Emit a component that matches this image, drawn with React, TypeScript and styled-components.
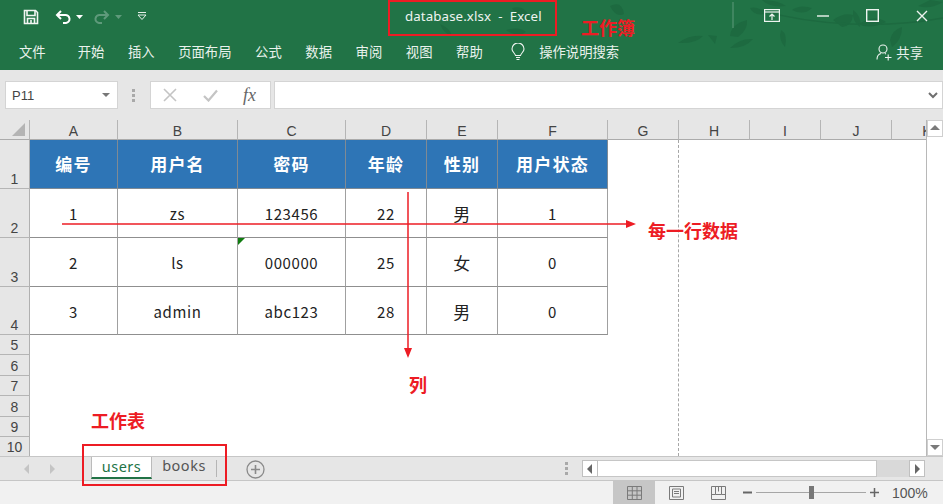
import React from 'react';
import styled, { createGlobalStyle } from 'styled-components';

const CJK = `"Noto Sans CJK SC", "Liberation Sans", sans-serif`;
const RED = '#ed1c24';

const GlobalStyle = createGlobalStyle`
    html, body {
        margin: 0;
        padding: 0;
        background: #fff;
    }
    * {
        box-sizing: border-box;
    }
`;

const Page = styled.div`
    position: relative;
    display: flex;
    flex-direction: column;
    width: 943px;
    height: 504px;
    overflow: hidden;
    font-family: ${CJK};
`;

const TitleBar = styled.header`
    position: relative;
    height: 70px;
    background: #217346;
    color: #fff;
`;

const LeafArt = styled.svg`
    position: absolute;
    left: 0;
    top: 0;
`;

const QuickRow = styled.div`
    position: relative;
    display: flex;
    align-items: center;
    height: 35px;
    padding: 0 0 2px 23px;
`;

const QuickIcon = styled.svg<{ $gap?: number }>`
    display: block;
    margin-left: ${p => p.$gap ?? 0}px;
`;

const DocTitle = styled.div`
    margin: -1px 0 0 258px;
    width: 150px;
    font-family: "Noto Sans", sans-serif;
    font-size: 13.3px;
    letter-spacing: 0.1px;
    white-space: pre;
    color: #eef4f0;
`;

const WindowControls = styled.div`
    display: flex;
    align-items: center;
    margin: -2px 0 0 auto;
    padding-right: 15px;
    gap: 37px;
`;

const RibbonRow = styled.nav`
    position: relative;
    display: flex;
    align-items: center;
    height: 35px;
    padding: 0 0 1px 19px;
    font-size: 13.33px;
    color: #eaf2ed;
`;

const RibbonTab = styled.span<{ $gap: number }>`
    margin-right: ${p => p.$gap}px;
    line-height: 18px;
`;

const SearchHint = styled.span`
    margin-left: 14px;
    line-height: 18px;
`;

const ShareBox = styled.div`
    display: flex;
    align-items: center;
    gap: 4px;
    margin-left: auto;
    padding-right: 20px;
`;

const FormulaRow = styled.div`
    display: flex;
    align-items: center;
    height: 50px;
    padding-left: 5px;
    background: #e6e6e6;
`;

const NameBox = styled.div`
    display: flex;
    align-items: center;
    justify-content: space-between;
    width: 113px;
    height: 28px;
    padding: 0 7px 0 6px;
    background: #fff;
    border: 1px solid #d4d4d4;
    font-family: "Liberation Sans", sans-serif;
    font-size: 13px;
    color: #444;
`;

const Grip = styled.div`
    display: flex;
    flex-direction: column;
    gap: 2px;
    width: 3px;
    margin: 0 15px 0 14px;
`;

const GripDot = styled.span`
    width: 3px;
    height: 3px;
    background: #a9a9a9;
`;

const FxButtons = styled.div`
    display: flex;
    align-items: center;
    justify-content: space-between;
    width: 121px;
    height: 28px;
    padding: 0 14px 0 12px;
    background: #fff;
    border: 1px solid #d4d4d4;
`;

const FxMark = styled.span`
    font-family: "Liberation Serif", serif;
    font-style: italic;
    font-size: 18px;
    color: #666;
`;

const FormulaInput = styled.div`
    display: flex;
    align-items: center;
    justify-content: flex-end;
    flex: 1;
    height: 28px;
    margin-left: 3px;
    padding-right: 4px;
    background: #fff;
    border: 1px solid #d4d4d4;
`;

const SheetArea = styled.div`
    display: flex;
    height: 336px;
    background: #fff;
`;

const CellGrid = styled.div`
    position: relative;
    display: grid;
    width: 926px;
    height: 336px;
    overflow: hidden;
    grid-template-columns: 30px 88px 120px 108px 81px 71px 110px 71px 71px 71px 71px 71px;
    grid-template-rows: 20px 49px 49px 49px 48px repeat(6, 20.4px);
`;

const Corner = styled.div`
    position: relative;
    background: #e6e6e6;
    border-right: 1px solid #b5b5b5;
    border-bottom: 1px solid #ababab;
`;

const CornerMark = styled.span`
    position: absolute;
    right: 4px;
    bottom: 3px;
    width: 0;
    height: 0;
    border-style: solid;
    border-width: 0 0 13px 13px;
    border-color: transparent transparent #b4b4b4 transparent;
`;

const ColHead = styled.div`
    display: flex;
    align-items: center;
    justify-content: center;
    padding-top: 2px;
    background: #e6e6e6;
    border-right: 1px solid #b5b5b5;
    border-bottom: 1px solid #ababab;
    font-family: "Liberation Sans", sans-serif;
    font-size: 14px;
    color: #444;
`;

const RowHead = styled.div`
    display: flex;
    align-items: flex-end;
    justify-content: center;
    background: #e6e6e6;
    border-right: 1px solid #b0b0b0;
    border-bottom: 1px solid #b5b5b5;
    font-family: "Liberation Sans", sans-serif;
    font-size: 14px;
    line-height: 18px;
    color: #444;
`;

const HeadCell = styled.div`
    display: flex;
    align-items: center;
    justify-content: center;
    padding-bottom: 1px;
    background: #2e75b6;
    border-right: 1px solid #7f8a94;
    border-bottom: 1px solid #7f8a94;
    font-weight: bold;
    font-size: 17px;
    letter-spacing: 1.2px;
    color: #fff;
`;

const DataCell = styled.div<{ $large?: boolean }>`
    position: relative;
    display: flex;
    align-items: center;
    justify-content: center;
    padding-top: 1px;
    border-right: 1px solid #a0a0a0;
    border-bottom: 1px solid #8f8f8f;
    font-size: ${p => (p.$large ? 17 : 15)}px;
    letter-spacing: 0.6px;
    color: #222;
`;

const EmptyCell = styled.div``;

const ErrorTick = styled.span`
    position: absolute;
    left: 0;
    top: 0;
    width: 0;
    height: 0;
    border-style: solid;
    border-width: 7px 7px 0 0;
    border-color: #107c10 transparent transparent transparent;
`;

const PageBreak = styled.div`
    position: absolute;
    left: 678px;
    top: 20px;
    bottom: 0;
    border-left: 1px dashed #a6a6a6;
`;

const VScroll = styled.div`
    display: flex;
    flex-direction: column;
    justify-content: space-between;
    width: 17px;
    background: #fff;
    border-left: 1px solid #b8b8b8;
`;

const ScrollBtn = styled.div`
    display: flex;
    align-items: center;
    justify-content: center;
    width: 16px;
    height: 17px;
    background: #fff;
    border: 1px solid #cfcfcf;
`;

const TabStrip = styled.div`
    display: flex;
    height: 25px;
    background: #e6e6e6;
    border-top: 1px solid #c6c6c6;
    border-bottom: 1px solid #c6c6c6;
`;

const TabNav = styled.div`
    display: flex;
    align-items: center;
    gap: 15px;
    width: 91px;
    padding-left: 22px;
`;

const SheetTab = styled.div<{ $active?: boolean }>`
    display: flex;
    align-items: ${p => (p.$active ? 'center' : 'flex-start')};
    justify-content: center;
    height: 22px;
    padding-bottom: ${p => (p.$active ? 2 : 0)}px;
    font-family: "Noto Sans", sans-serif;
    font-size: 14.5px;
    line-height: 16px;
    letter-spacing: 0.5px;
    color: ${p => (p.$active ? '#217346' : '#555')};
    width: ${p => (p.$active ? 61 : 64)}px;
    background: ${p => (p.$active ? '#fff' : 'transparent')};
    border-bottom: ${p => (p.$active ? '2px solid #217346' : '0')};
    border-left: ${p => (p.$active ? '1px solid #bbb' : '0')};
    border-right: ${p => (p.$active ? '1px solid #bbb' : '0')};
`;

const TabDivider = styled.span`
    width: 1px;
    height: 17px;
    margin-top: 3px;
    background: #b5b5b5;
`;

const AddSheet = styled.svg`
    margin: 3px 0 0 29px;
`;

const HGrip = styled(Grip)`
    margin: 5px 14px 0 auto;
    align-self: flex-start;
`;

const HScroll = styled.div`
    display: flex;
    align-items: center;
    width: 343px;
    height: 17px;
    margin: 3px 18px 0 0;
`;

const HBtn = styled(ScrollBtn)`
    border-color: #c0c0c0;
`;

const HThumb = styled.div`
    width: 279px;
    height: 17px;
    background: #fff;
    border: 1px solid #c6c6c6;
    border-left: 0;
`;

const HTrack = styled.div`
    flex: 1;
    height: 17px;
    background: #d9d9d9;
`;

const StatusBar = styled.footer`
    display: flex;
    align-items: stretch;
    height: 23px;
    padding-left: 613px;
    background: #f1f1f1;
    color: #555;
`;

const ViewBtn = styled.div<{ $active?: boolean }>`
    display: flex;
    align-items: center;
    justify-content: center;
    width: 42px;
    background: ${p => (p.$active ? '#c6c6c6' : 'transparent')};
`;

const ZoomBox = styled.div`
    display: flex;
    align-items: center;
    margin-left: 4px;
`;

const ZoomTrack = styled.div`
    position: relative;
    width: 110px;
    height: 1px;
    margin: 0 4px;
    background: #a6a6a6;
`;

const ZoomThumb = styled.span`
    position: absolute;
    left: 53px;
    top: -6px;
    width: 5px;
    height: 13px;
    background: #777;
`;

const ZoomText = styled.span`
    margin-left: 13px;
    font-family: "Liberation Sans", sans-serif;
    font-size: 14px;
    color: #555;
`;

/* annotations drawn on top of the screenshot */
const RedBox = styled.div<{ $x: number; $y: number; $w: number; $h: number }>`
    position: absolute;
    left: ${p => p.$x}px;
    top: ${p => p.$y}px;
    width: ${p => p.$w}px;
    height: ${p => p.$h}px;
    border: 2px solid ${RED};
`;

const RedLabel = styled.span<{ $x: number; $y: number }>`
    position: absolute;
    left: ${p => p.$x}px;
    top: ${p => p.$y}px;
    font-size: 18px;
    font-weight: bold;
    line-height: 20px;
    white-space: nowrap;
    color: ${RED};
`;

const ArrowLayer = styled.svg`
    position: absolute;
    left: 0;
    top: 0;
    pointer-events: none;
`;

const leaves = [
    'M730 36 Q731 24 747 20 Q748 30 738 37 Z',
    'M678 43 Q690 34 703 36 Q696 44 678 43 Z',
    'M708 35 L717 36 L715 44 Z',
    'M730 48 Q740 38 753 39 Q746 48 730 48 Z',
    'M781 30 Q788 34 785 47 Q778 40 781 30 Z',
    'M792 10 Q800 4 812 8 Q804 16 792 10 Z',
    'M833 20 Q844 12 853 15 Q852 26 842 27 Z',
    'M853 10 Q862 16 860 27 Q852 22 853 10 Z',
    'M858 24 Q870 30 886 22 Q876 14 858 24 Z',
    'M890 40 Q892 30 902 27 Q902 40 892 47 Z',
    'M762 0 Q770 8 786 6 Q778 0 762 0 Z',
    'M750 8 Q760 6 764 14 Q754 16 750 8 Z',
    'M918 6 Q930 10 943 2 L930 0 Z',
    'M512 8 Q526 4 530 20 Q520 22 512 8 Z',
    'M440 24 Q450 28 452 36 Q444 34 440 24 Z',
    'M506 30 Q520 26 526 32 Q518 38 506 30 Z',
    'M610 6 Q622 0 624 14 Q616 18 610 6 Z',
];

const columns = ['A', 'B', 'C', 'D', 'E', 'F', 'G', 'H', 'I', 'J', 'K'];
const headers = ['编号', '用户名', '密码', '年龄', '性别', '用户状态'];
const rows = [
    ['1', 'zs', '123456', '22', '男', '1'],
    ['2', 'ls', '000000', '25', '女', '0'],
    ['3', 'admin', 'abc123', '28', '男', '0'],
];

const Caret = ({ color = '#fff' }: { color?: string }) => (
    <QuickIcon $gap={5} width="7" height="4" viewBox="0 0 7 4">
        <path d="M0 0h7L3.5 4z" fill={color} />
    </QuickIcon>
);

const Triangle = ({ dir, color }: { dir: 'up' | 'down' | 'left' | 'right'; color: string }) => {
    const paths = {
        up: 'M0 6 L5 1 L10 6Z',
        down: 'M0 2 L10 2 L5 7Z',
        left: 'M7 0 L7 10 L2 5Z',
        right: 'M3 0 L3 10 L8 5Z',
    };
    return (
        <svg width="10" height="10" viewBox="0 0 10 10">
            <path d={paths[dir]} fill={color} />
        </svg>
    );
};

export default function App() {
    return (
        <Page>
            <GlobalStyle />
            <TitleBar>
                <LeafArt width="943" height="70" viewBox="0 0 943 70">
                    <g fill="#1d6a40">
                        {leaves.map((d, i) => <path key={i} d={d} />)}
                    </g>
                    <path d="M760 10 Q800 22 850 24 T943 18" fill="none" stroke="#1d6a40" strokeWidth="1.5" />
                    <path d="M733 2 V28" stroke="#5f9a7b" strokeWidth="1" />
                </LeafArt>
                <QuickRow>
                    <QuickIcon width="16" height="16" viewBox="0 0 16 16" fill="none" stroke="#f2f6f3" strokeWidth="1.6">
                        <path d="M1.5 1.5h11l2 2v11h-13z" />
                        <path d="M4 1.5v5h8v-5M4.5 14.5v-5h7v5" />
                        <path d="M8 11v3" />
                    </QuickIcon>
                    <QuickIcon $gap={16} width="16" height="16" viewBox="0 0 16 16" fill="none" stroke="#fff" strokeWidth="2">
                        <path d="M6 2 2 6l4 4" />
                        <path d="M2.5 6H10a4 4 0 0 1 1 8H8" />
                    </QuickIcon>
                    <Caret />
                    <QuickIcon $gap={11} width="16" height="16" viewBox="0 0 16 16" fill="none" stroke="#5f9a7b" strokeWidth="2">
                        <path d="m10 2 4 4-4 4" />
                        <path d="M13.5 6H6a4 4 0 0 0-1 8h3" />
                    </QuickIcon>
                    <Caret color="#5f9a7b" />
                    <QuickIcon $gap={15} width="10" height="9" viewBox="0 0 10 9" fill="none" stroke="#e6efe9" strokeWidth="1">
                        <path d="M1 0.5h8M1 3h8L5 7.5z" />
                    </QuickIcon>
                    <DocTitle>database.xlsx  -  Excel</DocTitle>
                    <WindowControls>
                        <svg width="16" height="13" viewBox="0 0 16 13" fill="none" stroke="#eef4f0" strokeWidth="1.2">
                            <rect x="0.6" y="0.6" width="14.8" height="11.8" />
                            <path d="M1 3h14" />
                            <path d="M5.5 7.5 8 5l2.5 2.5M8 5v6" />
                        </svg>
                        <svg width="12" height="2" viewBox="0 0 12 2">
                            <path d="M0 1h12" stroke="#eef4f0" strokeWidth="1.4" />
                        </svg>
                        <svg width="13" height="13" viewBox="0 0 13 13" fill="none" stroke="#eef4f0" strokeWidth="1.4">
                            <rect x="0.7" y="0.7" width="11.6" height="11.6" />
                        </svg>
                        <svg width="12" height="12" viewBox="0 0 12 12" fill="none" stroke="#eef4f0" strokeWidth="1.4">
                            <path d="m1 1 10 10M11 1 1 11" />
                        </svg>
                    </WindowControls>
                </QuickRow>
                <RibbonRow>
                    <RibbonTab $gap={32}>文件</RibbonTab>
                    <RibbonTab $gap={23.6}>开始</RibbonTab>
                    <RibbonTab $gap={23.6}>插入</RibbonTab>
                    <RibbonTab $gap={23.6}>页面布局</RibbonTab>
                    <RibbonTab $gap={23.6}>公式</RibbonTab>
                    <RibbonTab $gap={23.6}>数据</RibbonTab>
                    <RibbonTab $gap={23.6}>审阅</RibbonTab>
                    <RibbonTab $gap={23.6}>视图</RibbonTab>
                    <RibbonTab $gap={28.5}>帮助</RibbonTab>
                    <svg width="14" height="18" viewBox="0 0 14 18" fill="none" stroke="#eef4f0" strokeWidth="1.1">
                        <path d="M4.5 12.5C4 10 1 9 1 6a6 6 0 0 1 12 0c0 3-3 4-3.500 6.500z" />
                        <path d="M5 14.500h4M5.500 16.500h3" />
                    </svg>
                    <SearchHint>操作说明搜索</SearchHint>
                    <ShareBox>
                        <svg width="16" height="17" viewBox="0 0 16 17" fill="none" stroke="#eef4f0" strokeWidth="1.1">
                            <circle cx="7" cy="5" r="4" />
                            <path d="M1 15.500C1 12 3 10 5 9.500M9 9.500l1 .5" />
                            <path d="M9 13.500h6.500M12.200 10.500v6" />
                        </svg>
                        <span>共享</span>
                    </ShareBox>
                </RibbonRow>
            </TitleBar>

            <FormulaRow>
                <NameBox>
                    P11
                    <svg width="8" height="4" viewBox="0 0 8 4"><path d="M0 0h8L4 4z" fill="#777" /></svg>
                </NameBox>
                <Grip><GripDot /><GripDot /><GripDot /></Grip>
                <FxButtons>
                    <svg width="14" height="14" viewBox="0 0 14 14" fill="none" stroke="#c4c4c4" strokeWidth="1.6">
                        <path d="m1 1 12 12M13 1 1 13" />
                    </svg>
                    <svg width="15" height="13" viewBox="0 0 15 13" fill="none" stroke="#c4c4c4" strokeWidth="2.2">
                        <path d="m1 7 4.500 4.500L14 1.500" />
                    </svg>
                    <FxMark>fx</FxMark>
                </FxButtons>
                <FormulaInput>
                    <svg width="10" height="7" viewBox="0 0 10 7" fill="none" stroke="#6f6f6f" strokeWidth="2">
                        <path d="m1 1 4 4 4-4" />
                    </svg>
                </FormulaInput>
            </FormulaRow>

            <SheetArea>
                <CellGrid>
                    <Corner><CornerMark /></Corner>
                    {columns.map(c => <ColHead key={c}>{c}</ColHead>)}

                    <RowHead>1</RowHead>
                    {headers.map(h => <HeadCell key={h}>{h}</HeadCell>)}
                    {columns.slice(6).map(c => <EmptyCell key={c} />)}

                    {rows.map((row, r) => (
                        <React.Fragment key={r}>
                            <RowHead>{r + 2}</RowHead>
                            {row.map((v, c) => (
                                <DataCell key={c} $large={c === 4}>
                                    {r === 1 && c === 2 && <ErrorTick />}
                                    {v}
                                </DataCell>
                            ))}
                            {columns.slice(6).map(c => <EmptyCell key={c} />)}
                        </React.Fragment>
                    ))}

                    {[5, 6, 7, 8, 9, 10].map(n => (
                        <React.Fragment key={n}>
                            <RowHead>{n}</RowHead>
                            {columns.map(c => <EmptyCell key={c} />)}
                        </React.Fragment>
                    ))}
                    <PageBreak />
                </CellGrid>
                <VScroll>
                    <ScrollBtn><Triangle dir="up" color="#7a7a7a" /></ScrollBtn>
                    <ScrollBtn><Triangle dir="down" color="#7a7a7a" /></ScrollBtn>
                </VScroll>
            </SheetArea>

            <TabStrip>
                <TabNav>
                    <Triangle dir="left" color="#c4c4c4" />
                    <Triangle dir="right" color="#c4c4c4" />
                </TabNav>
                <SheetTab $active>users</SheetTab>
                <SheetTab>books</SheetTab>
                <TabDivider />
                <AddSheet width="19" height="19" viewBox="0 0 19 19" fill="none" stroke="#8a8a8a" strokeWidth="1.3">
                    <circle cx="9.500" cy="9.500" r="8.500" />
                    <path d="M9.500 5v9M5 9.500h9" strokeWidth="1.600" />
                </AddSheet>
                <HGrip><GripDot /><GripDot /><GripDot /></HGrip>
                <HScroll>
                    <HBtn><Triangle dir="left" color="#666" /></HBtn>
                    <HThumb />
                    <HTrack />
                    <HBtn><Triangle dir="right" color="#666" /></HBtn>
                </HScroll>
            </TabStrip>

            <StatusBar>
                <ViewBtn $active>
                    <svg width="15" height="14" viewBox="0 0 15 14" fill="none" stroke="#7a7a7a">
                        <path d="M.5.5h14v13H.5zM5.300.5v13M10 .5v13M.5 4.800h14M.5 9.200h14" />
                    </svg>
                </ViewBtn>
                <ViewBtn>
                    <svg width="15" height="14" viewBox="0 0 15 14" fill="none" stroke="#7a7a7a">
                        <path d="M.5.5h14v13H.5z" />
                        <path d="M3.500 3h8v8h-8zM5 5.500h5M5 7.500h5" />
                    </svg>
                </ViewBtn>
                <ViewBtn>
                    <svg width="15" height="14" viewBox="0 0 15 14" fill="none" stroke="#7a7a7a">
                        <path d="M.5.5h14v13H.5zM.5 8.500h4M4.500.5v8h6V.5M10.500 8.500h4M7.500.5v5" />
                    </svg>
                </ViewBtn>
                <ZoomBox>
                    <svg width="9" height="3" viewBox="0 0 9 3"><path d="M0 1.500h9" stroke="#666" strokeWidth="2" /></svg>
                    <ZoomTrack><ZoomThumb /></ZoomTrack>
                    <svg width="9" height="9" viewBox="0 0 9 9"><path d="M0 4.500h9M4.500 0v9" stroke="#666" strokeWidth="1.500" /></svg>
                    <ZoomText>100%</ZoomText>
                </ZoomBox>
            </StatusBar>

            <RedBox $x={388} $y={0} $w={169} $h={36} />
            <RedBox $x={82} $y={444} $w={145} $h={42} />
            <RedLabel $x={581} $y={17}>工作簿</RedLabel>
            <RedLabel $x={648} $y={220}>每一行数据</RedLabel>
            <RedLabel $x={409} $y={374}>列</RedLabel>
            <RedLabel $x={91} $y={410}>工作表</RedLabel>
            <ArrowLayer width="943" height="504" viewBox="0 0 943 504">
                <g stroke={RED} strokeWidth="1.500" fill={RED}>
                    <path d="M62 224H628" />
                    <path d="M408 192V350" />
                    <path d="M626 220 L636 224 L626 228Z" strokeWidth="0" />
                    <path d="M404 348 L408 358 L412 348Z" strokeWidth="0" />
                </g>
            </ArrowLayer>
        </Page>
    );
}
